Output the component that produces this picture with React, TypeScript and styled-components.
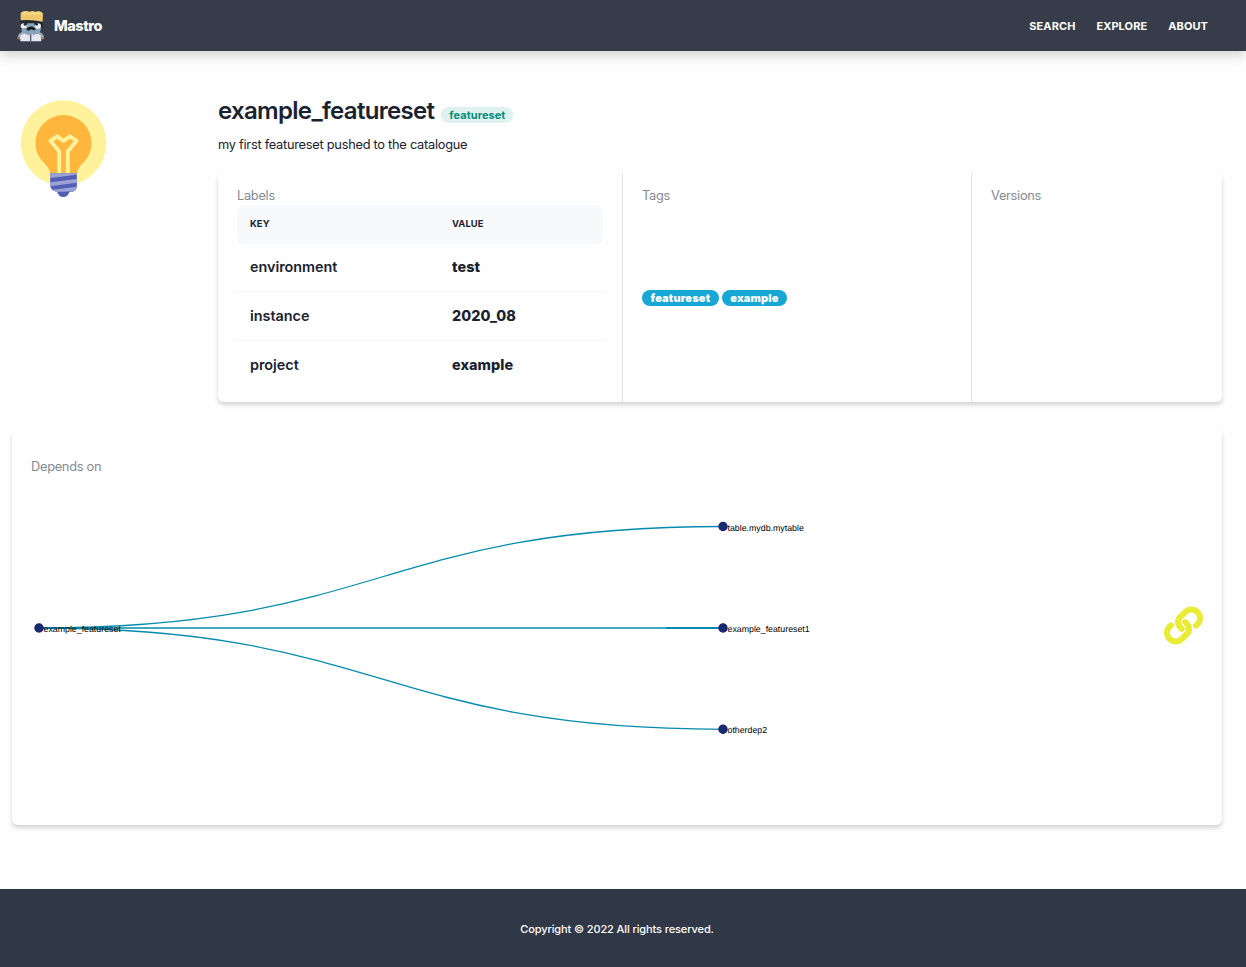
import React from "react";
import styled, { createGlobalStyle } from "styled-components";

const GlobalStyle = createGlobalStyle`
  *, *::before, *::after { box-sizing: border-box; }
  body {
    margin: 0;
    background: #fefefe;
    color: #1a2230;
    font-family: Inter, "Liberation Sans", sans-serif;
  }
`;

const Page = styled.div`
  display: flex;
  flex-direction: column;
  height: 967px;
`;

const NavBar = styled.header`
  display: flex;
  align-items: center;
  flex: none;
  height: 51px;
  padding: 0 38px 0 17px;
  background: #363c49;
  box-shadow: 0 4px 12px rgba(0, 0, 0, 0.19);
  color: #fff;
`;

const Brand = styled.span`
  margin: 0 auto 0 9px;
  font-size: 14.5px;
  font-weight: 800;
  line-height: 22px;
  letter-spacing: -0.45px;
`;

const NavLinks = styled.nav`
  display: flex;
  gap: 21px;
`;

const NavLink = styled.a`
  color: #fff;
  font-size: 11px;
  font-weight: 700;
  line-height: 16px;
  letter-spacing: 0.08px;
`;

const Main = styled.main`
  flex: 1;
  padding: 49px 24px 0 12px;
`;

const Summary = styled.section`
  display: flex;
  height: 302px;
`;

const Picture = styled.div`
  width: 206px;
  padding-left: 8px;
`;

const Details = styled.div`
  flex: 1;
`;

const TitleLine = styled.div`
  display: flex;
  align-items: center;
  height: 24px;
  gap: 7px;
`;

const Title = styled.h1`
  margin: -2px 0 0;
  font-size: 24px;
  font-weight: 600;
  line-height: 24px;
  letter-spacing: -0.68px;
`;

const Kind = styled.span`
  height: 16px;
  margin-top: 6px;
  padding: 0 8px;
  border-radius: 8px;
  background: #dff2ef;
  color: #058d7c;
  font-size: 11px;
  font-weight: 700;
  line-height: 16px;
  letter-spacing: 0.05px;
`;

const Description = styled.p`
  margin: 11px 0 18px;
  font-size: 12.8px;
  line-height: 20px;
  letter-spacing: -0.26px;
`;

const Card = styled.div`
  border-radius: 6px;
  background: #fefefe;
  box-shadow: 0 3px 4px rgba(0, 0, 0, 0.17);
`;

const InfoCard = styled(Card)`
  display: grid;
  grid-template-columns: 404px 349px 1fr;
  height: 229px;
`;

const Panel = styled.div<{ $divided?: boolean }>`
  padding: 13px 19px 0;
  border-left: ${(p) => (p.$divided ? "1px solid #e2e3e5" : "0")};
`;

const Caption = styled.div`
  color: #858a94;
  font-size: 12.8px;
  line-height: 19px;
  letter-spacing: -0.28px;
`;

const Table = styled.div`
  width: 366px;
`;

const Row = styled.div<{ $last?: boolean }>`
  display: grid;
  grid-template-columns: 202px 1fr;
  align-items: center;
  height: 49px;
  padding: 0 13px;
  border-bottom: 1px solid ${(p) => (p.$last ? "transparent" : "#f5f6f8")};
  font-size: 14.4px;
  font-weight: 600;
  line-height: 20px;
  letter-spacing: -0.02px;
`;

const HeadRow = styled(Row)`
  height: 39px;
  margin-bottom: -1px;
  padding-bottom: 1px;
  border: 0;
  border-radius: 6px;
  background: #f8f9fb;
  font-size: 9.4px;
  font-weight: 700;
  letter-spacing: 0.1px;
`;

const Value = styled.span`
  font-weight: 800;
  letter-spacing: 0.08px;
`;

const Tags = styled.div`
  display: flex;
  gap: 3px;
  margin-top: 85px;
`;

const Tag = styled.span`
  height: 16px;
  padding: 0 8.5px;
  border-radius: 8px;
  background: #17a7d5;
  color: #fff;
  font-size: 11px;
  font-weight: 900;
  line-height: 16px;
  letter-spacing: 0.18px;
`;

const GraphCard = styled(Card)`
  display: flex;
  align-items: center;
  justify-content: space-between;
  height: 396px;
  margin-top: 27px;
  padding: 0 19px;
`;

const GraphColumn = styled.div`
  align-self: flex-start;
  padding-top: 28px;
`;

const Graph = styled.svg`
  display: block;
  margin-top: 9px;
  font-family: "Liberation Sans", Arial, sans-serif;
  font-size: 8.8px;
  text-rendering: geometricPrecision;
`;

const ChainSvg = styled.svg`
  display: block;
  margin-bottom: 3px;
`;

const Footer = styled.footer`
  display: flex;
  align-items: center;
  justify-content: center;
  flex: none;
  height: 78px;
  padding: 2px 12px 0 0;
  background: #303848;
  color: #fff;
  font-size: 11px;
  font-weight: 500;
  letter-spacing: -0.11px;
`;

const Mascot = () => (
  <svg width="28" height="32" viewBox="51 32 84 96" aria-hidden="true">
    <path d="M53 113 Q55 102 66 98 H119 Q129 102 132 111 V119 H53Z" fill="#9aa5b5" />
    <circle cx="57" cy="117" r="4" fill="#a5764f" />
    <circle cx="128" cy="117" r="4" fill="#a5764f" />
    <path d="M61 108 L76 101 L90 106 L107 101 L122 108 L124 126 H61Z" fill="#e4e7f2" />
    <path d="M62 60 H128 V80 Q124 90 117 90 H72 Q63 89 61 78Z" fill="#222a30" />
    <path d="M82 72 H102 L108 86 L124 86 L120 98 L108 104 H78 L66 98 L64 88 L77 88Z" fill="#86a5ba" />
    <ellipse cx="71" cy="80" rx="9" ry="8" fill="#edf0f2" />
    <ellipse cx="114" cy="80" rx="9" ry="8" fill="#edf0f2" />
    <circle cx="75" cy="75" r="4" fill="#20272c" />
    <circle cx="110" cy="75" r="4" fill="#20272c" />
    <path d="M79 92 Q82 81 92 82 Q102 80 107 92 L101 93 L94 90 L86 94Z" fill="#151b21" />
    <path d="M92 105v21" stroke="#4f5966" strokeWidth="4" />
    <path d="M75 101l12 6M110 101l-12 6" stroke="#8793a4" strokeWidth="3" />
    <path d="M62 43 Q62 37 68 37 L72 35 H81 L88 37 L97 35 L107 37 L116 35 Q123 36 124 39 L129 42 L128 67 Q94 60 62 63Z" fill="#efc86b" />
    <path d="M66 38 H124 V46 H66Z" fill="#f5d684" />
  </svg>
);

const Bulb = () => (
  <svg width="86" height="98" viewBox="30.5 30 258 294" overflow="visible" aria-hidden="true">
    <circle cx="161" cy="159" r="128.5" fill="#fff29b" />
    <path
      d="M161 75 A84 84 0 0 0 77 159 C77 187 88 203 103 219 Q118 234 122 251 H200 Q204 234 219 219 C234 203 245 187 245 159 A84 84 0 0 0 161 75Z"
      fill="#ffb63d"
    />
    <path
      d="M148 250 V184 L122 153 L142 139 L161 153 L180 139 L200 153 L174 184 V250"
      fill="none"
      stroke="#fff29b"
      strokeWidth="12"
      strokeLinejoin="round"
    />
    <path d="M121 250 H201 V290 Q199 302 188 305 H179 Q174 321 160 321 Q147 321 142 306 L134 303 Q123 298 121 287Z" fill="#525fb5" />
    <path d="M121 250 H201 L200 254 L121 264ZM121 277 L201 267 V278 L121 289ZM127 299 L201 290 Q198 300 189 304 L139 306Z" fill="#9ba3d6" />
  </svg>
);

const Chain = () => (
  <ChainSvg
    width="39"
    height="39"
    viewBox="72 49.5 117 117"
    fill="none"
    stroke="#e9ec35"
    strokeWidth="18"
    strokeLinecap="round"
    strokeLinejoin="round"
    aria-hidden="true"
  >
    <path d="M168 108.5 L172.4 104.4 A26 26 0 0 0 135.6 67.6 L119.5 83.7 A20 20 0 0 0 119.5 112 L125.5 118" />
    <path d="M93 107.5 L88.6 111.6 A26 26 0 0 0 125.4 148.4 L141.5 132.3 A20 20 0 0 0 141.5 104 L135.5 98" />
  </ChainSvg>
);

const root = { name: "example_featureset", x: 8, y: 143 };
const dependencies = [
  { name: "table.mydb.mytable", x: 692, y: 41.5 },
  { name: "example_featureset1", x: 692, y: 143 },
  { name: "otherdep2", x: 692, y: 244.3 },
];

const DependencyGraph = () => (
  <Graph width="900" height="320">
    {dependencies.map((d) => (
      <path
        key={d.name}
        d={`M${root.x},${root.y}C350,${root.y} 350,${d.y} ${d.x},${d.y}`}
        fill="none"
        stroke="#058bad"
        strokeWidth="1.3"
      />
    ))}
    <path d="M635 143H692" stroke="#058bad" strokeWidth="2" />
    {[root, ...dependencies].map((n) => (
      <g key={n.name}>
        <circle cx={n.x} cy={n.y} r="4.1" fill="#112f6b" stroke="#211878" strokeWidth="1.2" />
        <text x={n.x + 4.5} y={n.y + 4}>{n.name}</text>
      </g>
    ))}
  </Graph>
);

const labels = [
  ["environment", "test"],
  ["instance", "2020_08"],
  ["project", "example"],
];

export default function App() {
  return (
    <Page>
      <GlobalStyle />
      <NavBar>
        <Mascot />
        <Brand>Mastro</Brand>
        <NavLinks>
          <NavLink>SEARCH</NavLink>
          <NavLink>EXPLORE</NavLink>
          <NavLink>ABOUT</NavLink>
        </NavLinks>
      </NavBar>
      <Main>
        <Summary>
          <Picture>
            <Bulb />
          </Picture>
          <Details>
            <TitleLine>
              <Title>example_featureset</Title>
              <Kind>featureset</Kind>
            </TitleLine>
            <Description>my first featureset pushed to the catalogue</Description>
            <InfoCard>
              <Panel>
                <Caption>Labels</Caption>
                <Table>
                  <HeadRow>
                    <span>KEY</span>
                    <span>VALUE</span>
                  </HeadRow>
                  {labels.map(([key, value], i) => (
                    <Row key={key} $last={i === labels.length - 1}>
                      <span>{key}</span>
                      <Value>{value}</Value>
                    </Row>
                  ))}
                </Table>
              </Panel>
              <Panel $divided>
                <Caption>Tags</Caption>
                <Tags>
                  <Tag>featureset</Tag>
                  <Tag>example</Tag>
                </Tags>
              </Panel>
              <Panel $divided>
                <Caption>Versions</Caption>
              </Panel>
            </InfoCard>
          </Details>
        </Summary>
        <GraphCard>
          <GraphColumn>
            <Caption>Depends on</Caption>
            <DependencyGraph />
          </GraphColumn>
          <Chain />
        </GraphCard>
      </Main>
      <Footer>Copyright © 2022 All rights reserved.</Footer>
    </Page>
  );
}
